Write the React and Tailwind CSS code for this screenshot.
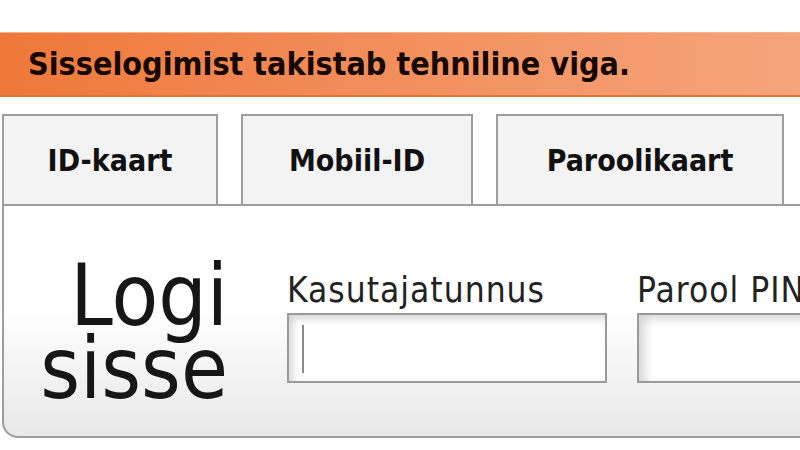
export default function App() {
  const cond = { fontFamily: '"DejaVu Sans Condensed", "DejaVu Sans", sans-serif' };
  return (
    <div className="w-[800px] h-[450px] bg-white overflow-hidden pt-[32px]">
      <div
        className="h-[65px] flex items-center pl-[28px] bg-linear-to-r from-[#ef7838] to-[#f5a47c] border-b-2 border-[#e2733c] border-t border-t-[#f6b48e]"
      >
        <span className="text-[32px] font-bold text-[#150800] whitespace-nowrap stretch-condensed" style={cond}>
          Sisselogimist takistab tehniline viga.
        </span>
      </div>

      <div className="mt-[17px] flex items-end pl-[2px] gap-[23px]">
        <div className="shrink-0 w-[216px] h-[90px] bg-[#f3f3f3] border-2 border-b-0 border-[#9d9d9d] flex items-center justify-center">
          <span className="text-[30px] font-bold text-[#111] stretch-condensed" style={cond}>ID-kaart</span>
        </div>
        <div className="shrink-0 w-[232px] h-[90px] bg-[#f3f3f3] border-2 border-b-0 border-[#9d9d9d] flex items-center justify-center">
          <span className="text-[30px] font-bold text-[#111] stretch-condensed" style={cond}>Mobiil-ID</span>
        </div>
        <div className="shrink-0 w-[288px] h-[90px] bg-[#f3f3f3] border-2 border-b-0 border-[#9d9d9d] flex items-center justify-center">
          <span className="text-[30px] font-bold text-[#111] stretch-condensed" style={cond}>Paroolikaart</span>
        </div>
      </div>

      <div className="ml-[2px] w-[830px] h-[234px] border-2 border-r-0 border-[#9d9d9d] rounded-bl-[16px] bg-linear-to-b from-white from-45% to-[#e8e8e8] flex items-start pt-[53px]">
        <div
          className="shrink-0 w-[224px] text-right text-[85px] leading-[73px] text-[#161616] stretch-condensed"
          style={cond}
        >
          <div>Logi</div>
          <div>sisse</div>
        </div>
        <div className="shrink-0 ml-[59px] mt-[11px] flex gap-[30px]">
          <div className="shrink-0 w-[320px]">
            <div className="text-[35px] leading-[40px] tracking-[1px] text-[#222] whitespace-nowrap stretch-condensed" style={cond}>
              Kasutajatunnus
            </div>
            <div className="mt-[3px] h-[70px] border-2 border-[#9a9a9a] bg-white shadow-[inset_4px_4px_7px_rgba(0,0,0,0.16)] pt-[10px] pl-[13px]">
              <div className="w-[2px] h-[48px] bg-[#8a8a8a]" />
            </div>
          </div>
          <div className="shrink-0 w-[320px]">
            <div className="text-[35px] leading-[40px] tracking-[1px] text-[#222] whitespace-nowrap stretch-condensed" style={cond}>
              Parool PIN1
            </div>
            <div className="mt-[3px] h-[70px] border-2 border-[#9a9a9a] bg-white shadow-[inset_6px_4px_10px_rgba(0,0,0,0.16)]" />
          </div>
        </div>
      </div>
    </div>
  );
}
